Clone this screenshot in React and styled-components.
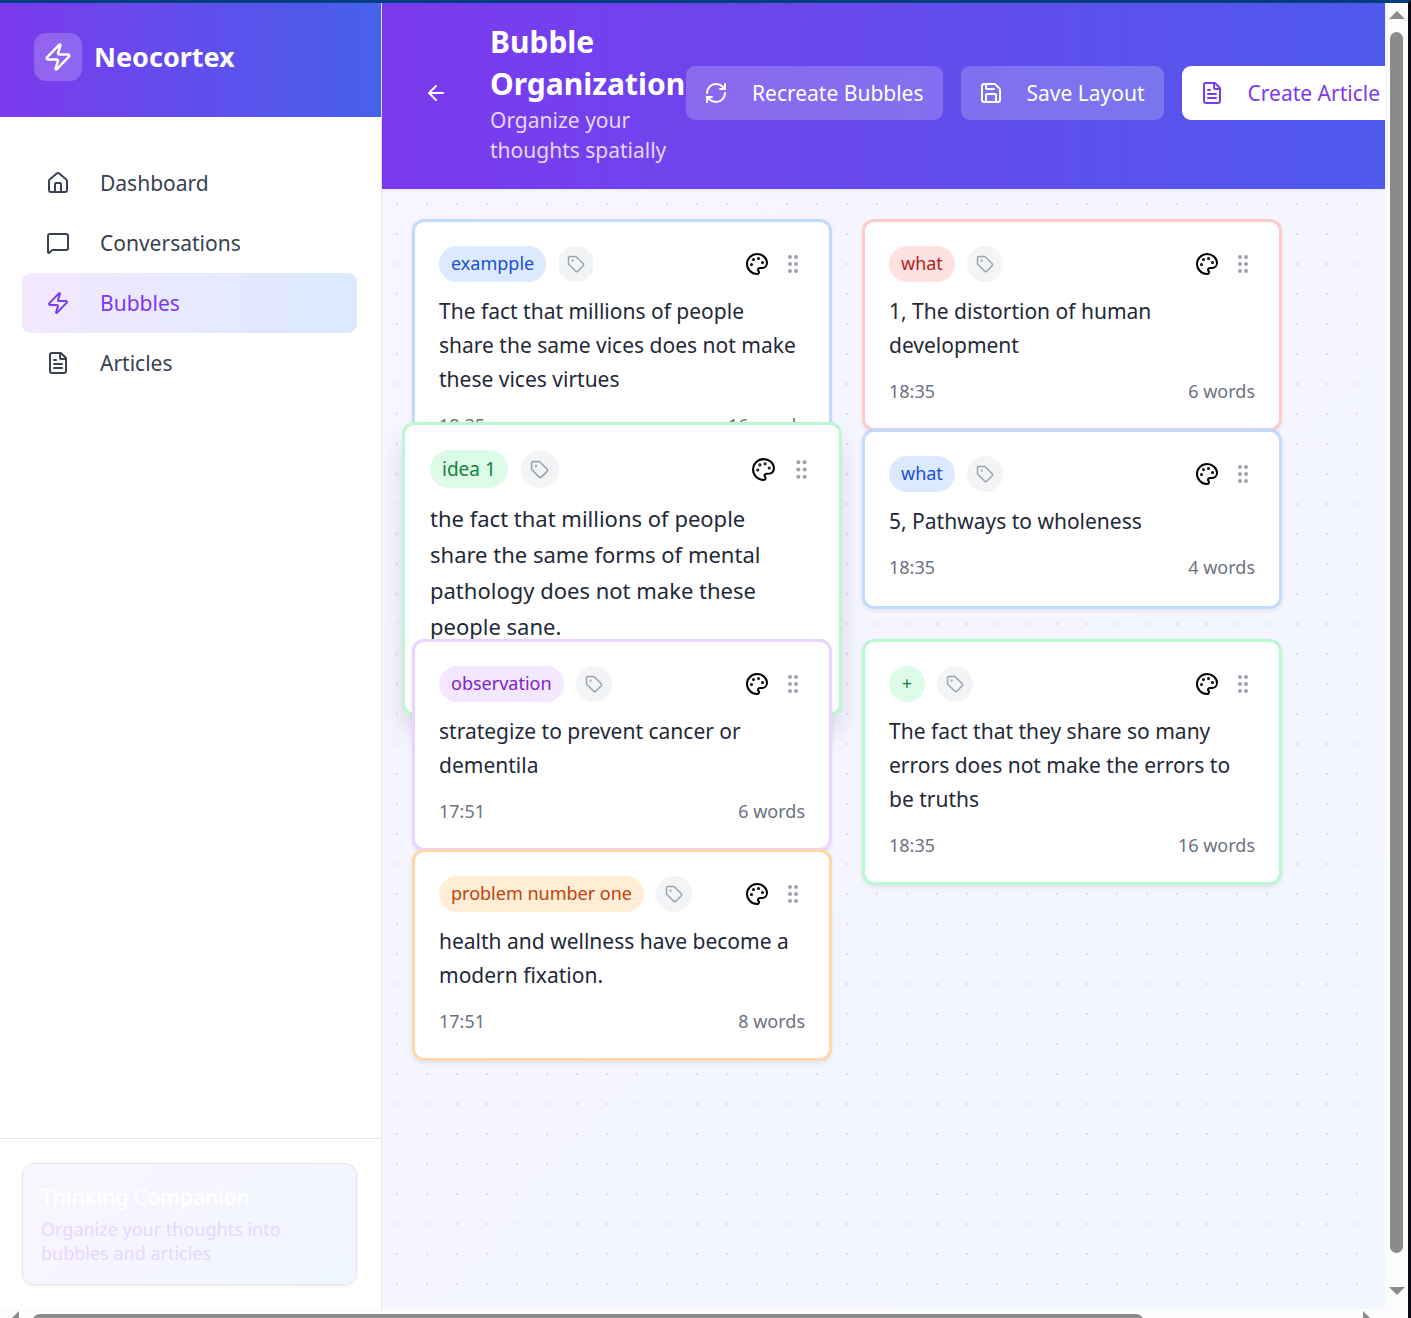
import React from "react";
import styled, { createGlobalStyle, css } from "styled-components";
import {
  ArrowLeft,
  FileText,
  GripVertical,
  House,
  MessageSquare,
  Palette,
  RefreshCw,
  Save,
  Tag,
  Zap,
} from "lucide-react";

const GlobalStyle = createGlobalStyle`
  *, *::before, *::after { box-sizing: border-box; }
  body {
    margin: 0;
    overflow: hidden;
    background: #fcfcfc;
    color: #1f2937;
    font-family: "Noto Sans", "Open Sans", sans-serif;
    font-size: 21px;
    line-height: 30px;
  }
  h1, p { margin: 0; }
  button { font: inherit; color: inherit; border: 0; padding: 0; background: none; cursor: pointer; }
  svg { display: block; flex-shrink: 0; }
`;

const Window = styled.div`
  display: grid;
  grid-template-columns: minmax(0, 1fr) 23px;
  grid-template-rows: minmax(0, 1fr) 9px;
  height: 100vh;
  border-top: 3px solid #004080;
  border-right: 3px solid #0b0a14;
`;

const Shell = styled.div`
  display: grid;
  grid-template-columns: 382px minmax(0, 1fr);
  min-height: 0;
`;

const Sidebar = styled.aside`
  display: flex;
  flex-direction: column;
  background: #fff;
  border-right: 1px solid #e5e7eb;
`;

const Brand = styled.div`
  display: flex;
  align-items: center;
  gap: 12px;
  height: 114px;
  padding: 0 34px 6px;
  background: linear-gradient(90deg, #7c3aed, #4661ea);
  color: #fff;
  font-size: 27px;
  font-weight: 700;
`;

const BrandMark = styled.span`
  display: grid;
  place-items: center;
  width: 48px;
  height: 48px;
  border-radius: 12px;
  background: rgba(255, 255, 255, 0.2);
`;

const Nav = styled.nav`
  display: flex;
  flex-direction: column;
  flex: 1;
  padding: 36px 24px 0 22px;
`;

const NavLink = styled.a`
  display: flex;
  align-items: center;
  gap: 30px;
  height: 60px;
  padding: 0 24px;
  border-radius: 9px;
  color: ${(p) => (p.$active ? "#7c3aed" : "#374151")};
  background: ${(p) => (p.$active ? "linear-gradient(90deg, #f3e8ff, #dbeafe)" : "none")};
  text-decoration: none;
`;

const SidebarFooter = styled.div`
  padding: 24px 24px 24px 22px;
  border-top: 1px solid #e5e5e5;
`;

const Companion = styled.section`
  display: flex;
  flex-direction: column;
  gap: 5px;
  padding: 18px 18px 19px;
  border: 1px solid #e5e5e5;
  border-radius: 12px;
  background: linear-gradient(135deg, #faf5ff, #eff6ff);
  box-shadow: 0 2px 3px rgba(0, 0, 0, 0.05);
`;

const CompanionTitle = styled.p`
  color: #fff;
  font-weight: 500;
`;

const CompanionText = styled.p`
  color: #e9d5ff;
  font-size: 18px;
  line-height: 24px;
`;

const Main = styled.main`
  display: flex;
  flex-direction: column;
  min-width: 0;
`;

const Header = styled.header`
  display: flex;
  align-items: center;
  z-index: 1;
  height: 186px;
  padding: 18px 36px 24px;
  overflow: hidden;
  background: linear-gradient(90deg, #7c3aed, #4f5aec);
  box-shadow: 0 1px 3px rgba(0, 0, 0, 0.08);
  color: #fff;
`;

const BackButton = styled.button`
  display: grid;
  place-items: center;
  flex-shrink: 0;
  width: 36px;
  height: 36px;
  margin-right: 36px;
`;

const Heading = styled.div`
  flex: 0 0 196px;
  min-width: 0;
`;

const Title = styled.h1`
  font-size: 30px;
  line-height: 42px;
  font-weight: 700;
`;

const Subtitle = styled.p`
  color: #e9d5ff;
`;

const Actions = styled.div`
  display: flex;
  flex-shrink: 0;
  gap: 18px;
`;

const ActionButton = styled.button`
  display: flex;
  align-items: center;
  flex-shrink: 0;
  gap: 24px;
  height: 54px;
  padding: 0 19px 0 18px;
  border-radius: 9px;
  background: ${(p) => (p.$primary ? "#fff" : "rgba(255, 255, 255, 0.2)")};
  color: ${(p) => (p.$primary ? "#7c3aed" : "#fff")};
  white-space: nowrap;
`;

const Canvas = styled.div`
  position: relative;
  flex: 1;
  min-height: 0;
  background:
    radial-gradient(circle, rgba(124, 58, 237, 0.15) 1px, transparent 1px) 0 0 / 30px 30px,
    linear-gradient(135deg, #f8f5ff, #f1f6ff);
`;

const tones = {
  blue: { border: "#bfdbfe", fill: "#dbeafe", ink: "#1d4ed8" },
  red: { border: "#fecaca", fill: "#fee2e2", ink: "#b91c1c" },
  green: { border: "#bbf7d0", fill: "#dcfce7", ink: "#15803d" },
  purple: { border: "#e9d5ff", fill: "#f3e8ff", ink: "#7e22ce" },
  orange: { border: "#fed7aa", fill: "#ffedd5", ink: "#c2410c" },
};

const CardBody = styled.p`
  margin: 12px 0 18px;
  padding-right: 6px;
  line-height: 34px;
`;

const CardHeader = styled.div`
  display: flex;
  align-items: center;
  gap: 12px;
`;

const Label = styled.span`
  min-width: 36px;
  height: 36px;
  padding: 0 12px;
  border-radius: 18px;
  background: ${(p) => tones[p.$tone].fill};
  color: ${(p) => tones[p.$tone].ink};
  font-size: 18px;
  line-height: 34px;
  text-align: center;
`;

const TagButton = styled.button`
  display: grid;
  place-items: center;
  width: 36px;
  height: 36px;
  margin-right: auto;
  border-radius: 50%;
  background: #f3f4f6;
  color: #9ca3af;
`;

const IconButton = styled.button`
  display: grid;
  color: ${(p) => (p.$muted ? "#9ca3af" : "#000")};
`;

const CardFooter = styled.div`
  display: flex;
  justify-content: space-between;
  padding-bottom: 2px;
  color: #6b7280;
  font-size: 18px;
  line-height: 22px;
`;

const Card = styled.article`
  position: absolute;
  left: ${(p) => p.$x}px;
  top: ${(p) => p.$y}px;
  width: 420px;
  min-height: 180px;
  padding: 24px;
  border: 3px solid ${(p) => tones[p.$tone].border};
  border-radius: 12px;
  background: #fff;
  box-shadow: 0 2px 4px rgba(0, 0, 0, 0.08);

  ${(p) =>
    p.$lifted &&
    css`
      width: 440px;
      padding: 25px;
      box-shadow: 0 16px 24px rgba(30, 20, 80, 0.12);
      ${CardBody} { padding-right: 12px; font-size: 22px; line-height: 36px; }
      ${Label} { height: 38px; font-size: 19px; line-height: 38px; border-radius: 19px; }
      ${TagButton} { width: 38px; height: 38px; }
      ${CardHeader} { gap: 13px; }
      ${CardFooter} { font-size: 19px; line-height: 24px; }
    `}
`;

const VerticalBar = styled.div`
  display: flex;
  flex-direction: column;
  align-items: center;
  gap: 13px;
  padding: 8px 0 14px;
`;

const VerticalThumb = styled.div`
  flex: 1;
  width: 13px;
  margin-bottom: 21px;
  border-radius: 7px;
  background: #8b8b8b;
`;

const Arrow = styled.span`
  width: 0;
  height: 0;
  border: 0 solid transparent;
  ${(p) => p.$to === "up" && css`border-width: 0 8px 8px; border-bottom-color: #8b8b8b;`}
  ${(p) => p.$to === "down" && css`border-width: 8px 8px 0; border-top-color: #8b8b8b;`}
  ${(p) => p.$to === "left" && css`border-width: 8px 8px 8px 0; border-right-color: #8b8b8b;`}
  ${(p) => p.$to === "right" && css`border-width: 8px 0 8px 8px; border-left-color: #8b8b8b;`}
`;

const HorizontalBar = styled.div`
  display: grid;
  grid-template-columns: 8px minmax(0, 1110fr) minmax(0, 192fr) 8px;
  align-items: start;
  padding: 2px 14px 0 11px;
  column-gap: 14px;
  overflow: hidden;
`;

const HorizontalThumb = styled.div`
  height: 13px;
  margin-top: 3px;
  border-radius: 7px;
  background: #8b8b8b;
`;

const navItems = [
  { label: "Dashboard", Icon: House },
  { label: "Conversations", Icon: MessageSquare },
  { label: "Bubbles", Icon: Zap, active: true },
  { label: "Articles", Icon: FileText },
];

const actions = [
  { label: "Recreate Bubbles", Icon: RefreshCw },
  { label: "Save Layout", Icon: Save },
  { label: "Create Article", Icon: FileText, primary: true },
];

const bubbles = [
  { id: 1, x: 30, y: 30, tone: "blue", label: "exampple", text: "The fact that millions of people share the same vices does not make these vices virtues", time: "18:35", words: 16 },
  { id: 2, x: 480, y: 30, tone: "red", label: "what", text: "1, The distortion of human development", time: "18:35", words: 6 },
  { id: 3, x: 20, y: 233, tone: "green", label: "idea 1", text: "the fact that millions of people share the same forms of mental pathology does not make these people sane.", time: "17:51", words: 19, lifted: true },
  { id: 4, x: 480, y: 240, tone: "blue", label: "what", text: "5, Pathways to wholeness", time: "18:35", words: 4 },
  { id: 5, x: 30, y: 450, tone: "purple", label: "observation", text: "strategize to prevent cancer or dementila", time: "17:51", words: 6 },
  { id: 6, x: 480, y: 450, tone: "green", label: "+", text: "The fact that they share so many errors does not make the errors to be truths", time: "18:35", words: 16 },
  { id: 7, x: 30, y: 660, tone: "orange", label: "problem number one", text: "health and wellness have become a modern fixation.", time: "17:51", words: 8 },
];

function Bubble({ x, y, tone, label, text, time, words, lifted }) {
  return (
    <Card $x={x} $y={y} $tone={tone} $lifted={lifted}>
      <CardHeader>
        <Label $tone={tone}>{label}</Label>
        <TagButton type="button" aria-label="Edit tags">
          <Tag size={lifted ? 19 : 18} />
        </TagButton>
        <IconButton type="button" aria-label="Change color">
          <Palette size={lifted ? 25 : 24} />
        </IconButton>
        <IconButton type="button" aria-label="Drag bubble" $muted>
          <GripVertical size={lifted ? 25 : 24} />
        </IconButton>
      </CardHeader>
      <CardBody>{text}</CardBody>
      <CardFooter>
        <span>{time}</span>
        <span>{words} words</span>
      </CardFooter>
    </Card>
  );
}

export default function App() {
  return (
    <>
      <GlobalStyle />
      <Window>
        <Shell>
          <Sidebar>
            <Brand>
              <BrandMark>
                <Zap size={30} />
              </BrandMark>
              Neocortex
            </Brand>
            <Nav>
              {navItems.map(({ label, Icon, active }) => (
                <NavLink key={label} href="#" $active={active} aria-current={active ? "page" : undefined}>
                  <Icon size={24} />
                  {label}
                </NavLink>
              ))}
            </Nav>
            <SidebarFooter>
              <Companion>
                <CompanionTitle>Thinking Companion</CompanionTitle>
                <CompanionText>Organize your thoughts into bubbles and articles</CompanionText>
              </Companion>
            </SidebarFooter>
          </Sidebar>
          <Main>
            <Header>
              <BackButton type="button" aria-label="Back">
                <ArrowLeft size={24} />
              </BackButton>
              <Heading>
                <Title>Bubble Organization</Title>
                <Subtitle>Organize your thoughts spatially</Subtitle>
              </Heading>
              <Actions>
                {actions.map(({ label, Icon, primary }) => (
                  <ActionButton key={label} type="button" $primary={primary}>
                    <Icon size={24} />
                    {label}
                  </ActionButton>
                ))}
              </Actions>
            </Header>
            <Canvas>
              {bubbles.map((bubble) => (
                <Bubble key={bubble.id} {...bubble} />
              ))}
            </Canvas>
          </Main>
        </Shell>
        <VerticalBar aria-hidden="true">
          <Arrow $to="up" />
          <VerticalThumb />
          <Arrow $to="down" />
        </VerticalBar>
        <HorizontalBar aria-hidden="true">
          <Arrow $to="left" />
          <HorizontalThumb />
          <span />
          <Arrow $to="right" />
        </HorizontalBar>
      </Window>
    </>
  );
}
